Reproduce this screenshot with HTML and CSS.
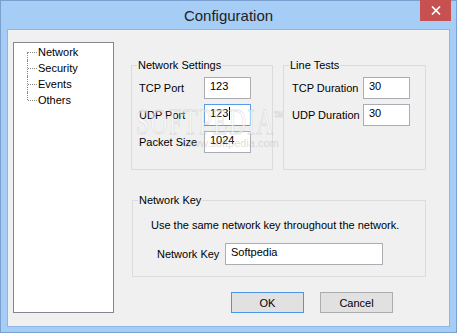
FILE: index.html
```html
<!DOCTYPE html>
<html>
<head>
<meta charset="utf-8">
<title>Configuration</title>
<link rel="stylesheet" href="styles.css">
</head>
<body>
<div class="window">
  <div class="titlebar">
    <span class="title">Configuration</span>
    <button class="close" aria-label="Close">
      <svg width="10" height="9" viewBox="0 0 10 9"><path d="M1 0.5 L9 8.5 M9 0.5 L1 8.5" stroke="#fff" stroke-width="1.7" fill="none"/></svg>
    </button>
  </div>
  <div class="client">
    <ul class="tree">
      <li>Network</li>
      <li>Security</li>
      <li>Events</li>
      <li>Others</li>
    </ul>
    <div class="main">
      <div class="top-row">
        <fieldset class="group ns">
          <legend>Network Settings</legend>
          <div class="form">
            <span class="lbl">TCP Port</span><div class="field">123</div>
            <span class="lbl">UDP Port</span><div class="field focus">123<span class="caret"></span></div>
            <span class="lbl">Packet Size</span><div class="field">1024</div>
          </div>
        </fieldset>
        <fieldset class="group lt">
          <legend>Line Tests</legend>
          <div class="form">
            <span class="lbl">TCP Duration</span><div class="field">30</div>
            <span class="lbl">UDP Duration</span><div class="field">30</div>
          </div>
        </fieldset>
      </div>
      <fieldset class="group nk">
        <legend>Network Key</legend>
        <div class="desc">Use the same network key throughout the network.</div>
        <div class="row">
          <span class="lbl keylbl">Network Key</span><div class="field keyfield">Softpedia</div>
        </div>
      </fieldset>
      <div class="buttons">
        <button class="btn ok">OK</button>
        <button class="btn">Cancel</button>
      </div>
    </div>
    <div class="watermark">SOFTPEDIA<sup>™</sup></div>
    <div class="watermark-url">www.softpedia.com</div>
  </div>
</div>
</body>
</html>
```
FILE: styles.css
```css
* { box-sizing: border-box; }
html, body { margin: 0; padding: 0; }
body {
  width: 457px;
  height: 333px;
  overflow: hidden;
  font-family: "Liberation Sans", Arial, sans-serif;
  font-size: 11px;
  color: #000;
}
.window {
  width: 457px;
  height: 333px;
  border: 1px solid #7b9fcf;
  background: #a6cdf6;
  display: flex;
  flex-direction: column;
  position: relative;
}
.titlebar {
  height: 28px;
  flex: none;
  display: flex;
  justify-content: center;
  align-items: center;
}
.title {
  font-size: 15px;
  color: #222;
  margin-top: 1px;
}
.close {
  position: absolute;
  top: -1px;
  right: 5px;
  width: 31px;
  height: 21px;
  padding: 0;
  border: none;
  background: #c75050;
  display: flex;
  align-items: center;
  justify-content: center;
}
.close svg { display: block; }
.client {
  margin: 0 6px;
  height: 298px;
  flex: none;
  border: 1px solid #8db4e3;
  background: #f0f0f0;
  display: flex;
  align-items: flex-start;
  position: relative;
}
.tree {
  margin: 12px 0 0 5px;
  padding: 1px 0 0 0;
  width: 101px;
  height: 271px;
  flex: none;
  border: 1px solid #828790;
  background: #fff;
  list-style: none;
}
.tree li {
  position: relative;
  height: 16px;
  line-height: 16px;
  padding-left: 24px;
}
.tree li::before {
  content: "";
  position: absolute;
  left: 13px;
  top: 0;
  bottom: 0;
  border-left: 1px dotted #8a8a8a;
}
.tree li:first-child::before { top: 8px; }
.tree li:last-child::before { bottom: 8px; }
.tree li::after {
  content: "";
  position: absolute;
  left: 14px;
  top: 8px;
  width: 9px;
  border-top: 1px dotted #8a8a8a;
}
.main {
  margin: 29px 0 0 17px;
  display: flex;
  flex-direction: column;
}
.top-row {
  display: flex;
  gap: 10px;
}
.group {
  margin: 0;
  padding: 0;
  border: 1px solid #dcdcdc;
  min-width: 0;
}
.group legend {
  margin-left: 5px;
  padding: 0 1px;
  line-height: 13px;
}
.lbl { line-height: 13px; white-space: nowrap; }
.form {
  display: grid;
  row-gap: 5px;
  align-items: center;
  padding-top: 5px;
}
.ns { width: 142px; height: 111px; }
.ns .form { grid-template-columns: 65px 47px; padding-left: 7px; }
.lt { width: 143px; height: 111px; }
.lt .form { grid-template-columns: 71px 47px; padding-left: 8px; }
.field {
  height: 22px;
  border: 1px solid #abadb3;
  background: #fff;
  padding: 2px 5px 0;
  line-height: 13px;
  white-space: nowrap;
}
.field.focus { border-color: #569de5; }
.caret {
  display: inline-block;
  width: 1px;
  height: 13px;
  background: #000;
  vertical-align: -3px;
  margin-left: 1px;
}
.nk {
  width: 294px;
  height: 83px;
  margin: 24px 0 0 1px;
}
.desc {
  padding: 12px 0 0 18px;
  line-height: 13px;
}
.row {
  display: flex;
  align-items: center;
  margin-top: 11px;
  padding-left: 24px;
}
.keylbl { width: 68px; }
.keyfield { width: 158px; }
.buttons {
  display: flex;
  gap: 16px;
  margin-top: 15px;
  padding-left: 100px;
}
.btn {
  width: 73px;
  height: 21px;
  padding: 0;
  border: 1px solid #adadad;
  background: #e1e1e1;
  font-family: "Liberation Sans", Arial, sans-serif;
  font-size: 11px;
  color: #000;
}
.btn.ok { border-color: #4a97e6; }
.watermark {
  position: absolute;
  left: 128px;
  top: 74px;
  font-family: "Liberation Serif", "Times New Roman", serif;
  font-size: 24px;
  letter-spacing: 1px;
  color: rgba(255, 255, 255, 0.55);
  -webkit-text-stroke: 0.6px rgba(190, 190, 190, 0.45);
  transform: scaleY(1.45);
  transform-origin: top left;
  pointer-events: none;
}
.watermark sup { font-size: 9px; vertical-align: 10px; }
.watermark-url {
  position: absolute;
  left: 176px;
  top: 107px;
  font-size: 11px;
  color: rgba(170, 170, 170, 0.4);
  pointer-events: none;
}
```
